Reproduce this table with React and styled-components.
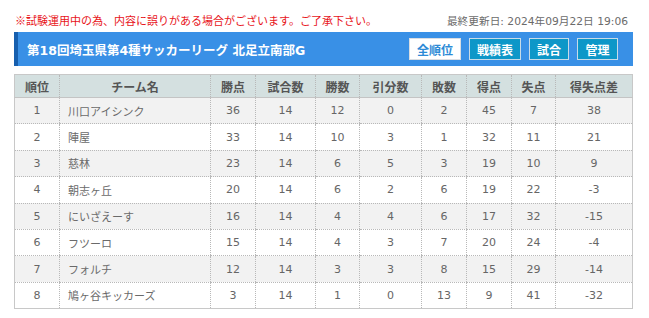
import styled, { createGlobalStyle } from "styled-components";

const GlobalStyle = createGlobalStyle`
  body {
    margin: 0;
    background: #ffffff;
    font-family: "DejaVu Sans", "Noto Sans CJK JP", sans-serif;
  }
`;

const Page = styled.div`
  width: 619px;
  margin: 0 14px;
  padding-top: 11px;
`;

const TopLine = styled.div`
  display: flex;
  justify-content: space-between;
  align-items: center;
  height: 18px;
  margin-bottom: 3px;
  padding: 0 5px 0 1px;
  font-size: 11px;
`;

const Notice = styled.span`
  color: #e8141a;
  font-family: "Noto Sans CJK JP", sans-serif;
`;

const Updated = styled.span`
  color: #6b6b6b;
  font-size: 10.7px;
`;

const TitleBar = styled.div`
  display: flex;
  align-items: center;
  justify-content: space-between;
  height: 34px;
  background: #3990e6;
  border-left: 4px solid #175fae;
  padding: 0 15px 0 9px;
`;

const Title = styled.h1`
  margin: 0;
  font-size: 12.5px;
  font-weight: bold;
  color: #ffffff;
`;

const Nav = styled.div`
  display: flex;
  gap: 8px;
`;

const NavButton = styled.a`
  display: flex;
  align-items: center;
  justify-content: center;
  box-sizing: border-box;
  height: 22px;
  width: ${(p) => p.$w}px;
  font-size: 12px;
  font-weight: bold;
  font-family: "Noto Sans CJK JP", sans-serif;
  border: 1px solid ${(p) => (p.$active ? "#d9dde2" : "#c7dbe8")};
  background: ${(p) => (p.$active ? "#ffffff" : "#0d97c8")};
  color: ${(p) => (p.$active ? "#2c8ad6" : "#ffffff")};
`;

const Table = styled.table`
  width: 618px;
  margin-top: 8px;
  border-collapse: collapse;
  border: 1px solid #c8c8c8;
  font-size: 11px;
  color: #666666;
  table-layout: fixed;
`;

const Th = styled.th`
  height: 22px;
  padding: 0;
  background: #d4e0e0;
  font-weight: bold;
  font-size: 12px;
  font-family: "Noto Sans CJK JP", sans-serif;
  color: #555555;
  border-left: 1px dotted #b8b8b8;
  border-bottom: 1px solid #c4c4c4;
  &:first-child {
    border-left: none;
  }
`;

const Row = styled.tr`
  background: ${(p) => (p.$odd ? "#f2f2f2" : "#ffffff")};
`;

const Td = styled.td`
  height: 25.4px;
  padding: 0;
  text-align: ${(p) => (p.$left ? "left" : "center")};
  padding-left: ${(p) => (p.$left ? "8px" : "0")};
  border-left: 1px dotted #b8b8b8;
  border-bottom: 1px dotted #b8b8b8;
  &:first-child {
    border-left: none;
  }
`;

const TeamName = styled.span`
  font-family: "Noto Sans CJK JP", sans-serif;
  color: #6a6a6a;
`;

const columns = [
  { label: "順位", w: 45 },
  { label: "チーム名", w: 151 },
  { label: "勝点", w: 45 },
  { label: "試合数", w: 60 },
  { label: "勝数", w: 44 },
  { label: "引分数", w: 62 },
  { label: "敗数", w: 45 },
  { label: "得点", w: 45 },
  { label: "失点", w: 44 },
  { label: "得失点差", w: 77 },
];

const rows = [
  [1, "川口アイシンク", 36, 14, 12, 0, 2, 45, 7, 38],
  [2, "陣屋", 33, 14, 10, 3, 1, 32, 11, 21],
  [3, "慈林", 23, 14, 6, 5, 3, 19, 10, 9],
  [4, "朝志ヶ丘", 20, 14, 6, 2, 6, 19, 22, -3],
  [5, "にいざえーす", 16, 14, 4, 4, 6, 17, 32, -15],
  [6, "フツーロ", 15, 14, 4, 3, 7, 20, 24, -4],
  [7, "フォルチ", 12, 14, 3, 3, 8, 15, 29, -14],
  [8, "鳩ヶ谷キッカーズ", 3, 14, 1, 0, 13, 9, 41, -32],
];

const App = () => {
  return (
    <Page>
      <GlobalStyle />
      <TopLine>
        <Notice>※試験運用中の為、内容に誤りがある場合がございます。ご了承下さい。</Notice>
        <Updated>最終更新日: 2024年09月22日 19:06</Updated>
      </TopLine>
      <TitleBar>
        <Title>第18回埼玉県第4種サッカーリーグ 北足立南部G</Title>
        <Nav>
          <NavButton $active $w={52}>全順位</NavButton>
          <NavButton $w={52}>戦績表</NavButton>
          <NavButton $w={40}>試合</NavButton>
          <NavButton $w={41}>管理</NavButton>
        </Nav>
      </TitleBar>
      <Table>
        <colgroup>
          {columns.map((c) => (
            <col key={c.label} style={{ width: c.w }} />
          ))}
        </colgroup>
        <thead>
          <tr>
            {columns.map((c) => (
              <Th key={c.label}>{c.label}</Th>
            ))}
          </tr>
        </thead>
        <tbody>
          {rows.map((r, i) => (
            <Row key={r[0]} $odd={i % 2 === 0}>
              {r.map((v, j) =>
                j === 1 ? (
                  <Td key={j} $left>
                    <TeamName>{v}</TeamName>
                  </Td>
                ) : (
                  <Td key={j}>{v}</Td>
                )
              )}
            </Row>
          ))}
        </tbody>
      </Table>
    </Page>
  );
};

export default App;
